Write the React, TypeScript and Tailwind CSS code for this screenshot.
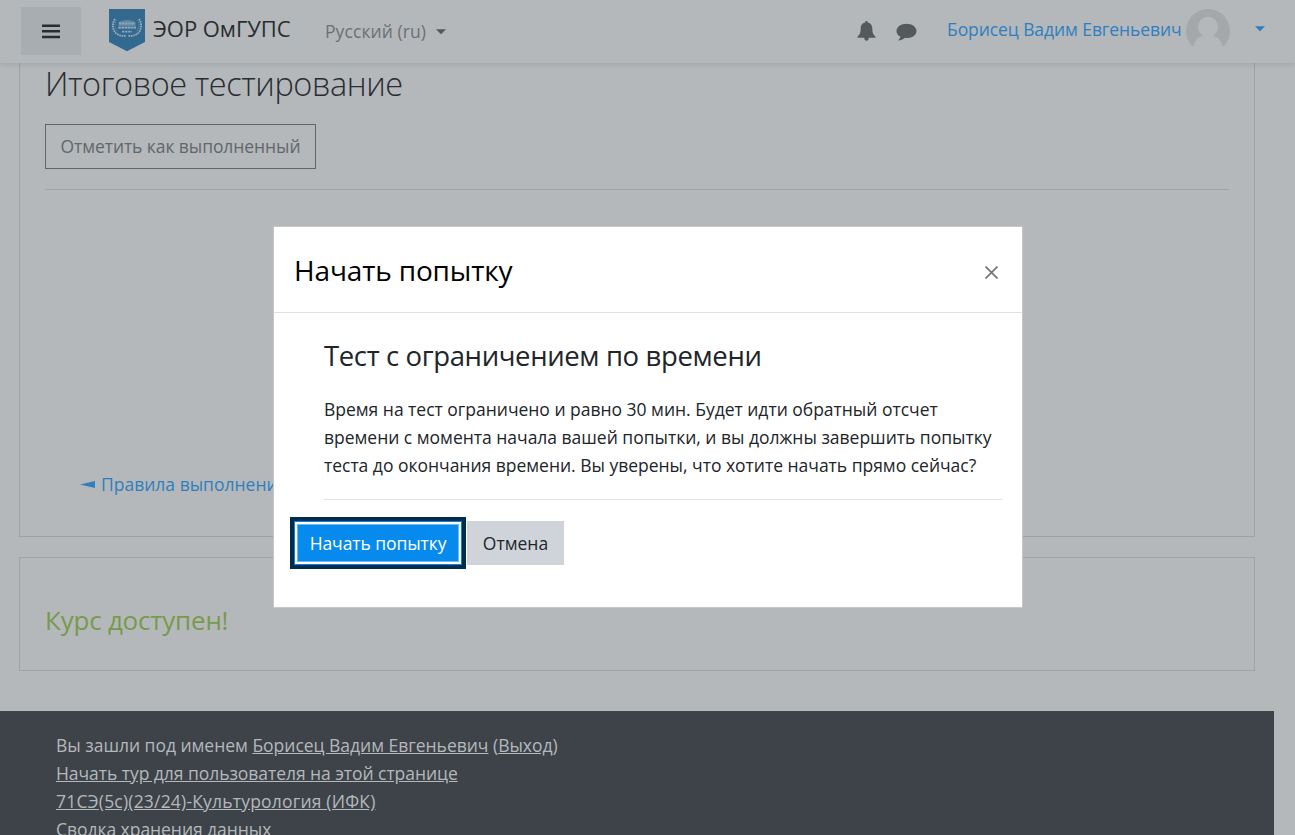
import React from "react";

function Logo() {
  return (
    <svg className="ml-[27px] mt-[9px] h-[43px] w-[38px] shrink-0 self-start" viewBox="0 0 38 43">
      <path d="M1 0H37V33L19 42.3L1 33Z" fill="#33688f" />
      <path d="M1.5 32L19 41.2L36.500 32" fill="none" stroke="#2b6fa6" strokeWidth="1" />
      <g fill="none" stroke="#9db1be" strokeWidth="1.8" strokeDasharray="1.6 0.8">
        <path d="M7 10C3.500 15 4.500 22 9 25C12 27 15 27.300 18 26.500" />
        <path d="M31 10C34.500 15 33.500 22 29 25C26 27 23 27.300 20 26.500" />
      </g>
      <path d="M8.500 11C5.800 15 6.800 20.500 10.500 23M29.500 11C32.200 15 31.200 20.500 27.500 23" fill="none" stroke="#7493a8" strokeWidth="1" strokeDasharray="1.200 1" />
      <path d="M10.500 13Q19 9 27.500 13V17H10.500ZM10 17.500H28V19.500H10Z" fill="#5f87a3" />
      <path d="M11 14.500H27M10.500 18.600H28M14 22.700H24" fill="none" stroke="#91a8b7" strokeWidth="1.8" strokeDasharray="2.300 0.8" />
    </svg>
  );
}

function Caret({ className }: { className: string }) {
  return (
    <svg className={className} width="10" height="6" viewBox="0 0 10 6" fill="currentColor">
      <path d="M0 0.200H10L5 5.300Z" />
    </svg>
  );
}

function Header() {
  return (
    <header className="relative z-10 flex h-[63px] w-full shrink-0 items-center bg-[#b4b8bb] shadow-[0_2px_5px_rgba(0,0,0,0.09)]">
      <button className="ml-[21px] mb-px flex h-12 w-[60px] shrink-0 items-center justify-center bg-[#a8adb1]">
        <svg width="18" height="15" viewBox="0 0 18 15" fill="#292d31">
          <path d="M0 0.500h18v2.500H0zM0 6h18v2.500H0zM0 11.700h18v2.500H0z" />
        </svg>
      </button>
      <Logo />
      <span className="mb-[6px] ml-[7px] w-[139px] whitespace-nowrap text-[22px] tracking-[-0.05px] text-[#292d31]">ЭОР ОмГУПС</span>
      <button className="ml-[33px] flex items-center text-[17.5px] text-[#6c7073]">
        <span className="w-[102px] whitespace-nowrap text-left tracking-[0.08px]">Русский (ru)</span>
        <Caret className="ml-[9px] text-[#53585b]" />
      </button>
      <div className="ml-auto flex items-center">
        <svg className="mb-px h-5 w-[19px]" viewBox="0 0 19 20" fill="#54595c">
          <path d="M9.500 0C8.600 0 8.300 0.500 8.300 1.400C5 2 3.700 4.600 3.700 7.500C3.700 12 2.500 14 0.500 15.700V16.800H7.200C7.300 18.600 8.100 19.700 9.500 19.700S11.700 18.600 11.800 16.800H18.500V15.700C16.500 14 15.300 12 15.300 7.500C15.300 4.600 14 2 10.700 1.400C10.700 0.500 10.400 0 9.500 0Z" />
        </svg>
        <svg className="ml-5 h-[18px] w-[21px]" viewBox="0 0 21 18" fill="#54595c">
          <path d="M10.500 0.800C4.900 0.800 0.500 4 0.500 8C0.500 10.500 2 12.500 4.500 13.800C4.100 15.300 3.200 16.300 2 17.500C4.800 17.300 7 16.300 8.700 15C15.500 15.700 20.500 12.500 20.500 8C20.500 4 16.100 0.800 10.500 0.800Z" />
        </svg>
        <span className="mb-1 ml-[30px] w-[235px] whitespace-nowrap text-[17.5px] tracking-[-0.08px] text-[#2f7fbe]">Борисец Вадим Евгеньевич</span>
        <svg className="mb-[2px] ml-1 h-11 w-11" viewBox="0 0 44 44">
          <path d="M22 0A22 22 0 0 0 7 38C9 31 12 28 17 26.500A10 10 0 1 1 27 26.500C32 28 35 31 37 38A22 22 0 0 0 22 0Z" fill="#a4a8ab" />
        </svg>
        <Caret className="mb-[5px] ml-[25px] mr-[30px] text-[#2f7fbe]" />
      </div>
    </header>
  );
}

function Modal() {
  return (
    <section role="dialog" className="absolute left-[273px] top-[226px] z-20 flex h-[382px] w-[750px] flex-col border border-[#c5c6c7] bg-white">
      <div className="flex h-[86px] shrink-0 items-center justify-between border-b border-[#dee2e6] pl-5 pr-6">
        <h2 className="whitespace-nowrap text-[28px] leading-9 tracking-[-0.15px] text-black">Начать попытку</h2>
        <svg className="mt-[5px]" width="13" height="13" viewBox="0 0 13 13" fill="none" stroke="#757575" strokeWidth="1.700">
          <path d="M0.500 0.500L12.500 12.500M12.500 0.500L0.500 12.500" />
        </svg>
      </div>
      <div className="ml-[50px] mr-5 flex h-[187px] shrink-0 flex-col border-b border-[#dee2e6] text-[#212529]">
        <h3 className="mt-[25px] whitespace-nowrap text-[27.5px] leading-9 tracking-[-0.37px]">Тест с ограничением по времени</h3>
        <p className="mt-[21px] whitespace-nowrap text-[17.5px] leading-7 tracking-[-0.015px]">
          <span className="block">Время на тест ограничено и равно 30 мин. Будет идти обратный отсчет</span>
          <span className="block">времени с момента начала вашей попытки, и вы должны завершить попытку</span>
          <span className="block">теста до окончания времени. Вы уверены, что хотите начать прямо сейчас?</span>
        </p>
      </div>
      <div className="ml-5 mt-[21px] flex gap-[5px] text-[17.5px]">
        <button className="h-11 w-[168px] border border-[#0f7fd9] bg-[#068aed] tracking-[-0.08px] text-white shadow-[inset_0_0_0_2px_#fff,inset_0_0_0_3px_#6cb9f4] outline-4 outline-[#002d4d]">Начать попытку</button>
        <button className="h-11 w-[97px] bg-[#ced4da] text-[#212529]">Отмена</button>
      </div>
    </section>
  );
}

export default function App() {
  return (
    <div className="relative flex h-[835px] w-[1295px] flex-col overflow-hidden bg-[#b4b8bb] font-['Open_Sans','Noto_Sans',sans-serif]">
      <Header />
      <main className="ml-[19px] flex w-[1236px] shrink-0 flex-col">
        <section className="flex h-[474px] flex-col border border-t-0 border-[#9fa3a6] px-[25px]">
          <h1 className="whitespace-nowrap text-[32.5px] font-light leading-[42px] tracking-[-0.42px] text-[#292d31]">Итоговое тестирование</h1>
          <button className="mt-[19px] h-[45px] w-[271px] shrink-0 whitespace-nowrap border border-[#606569] text-[17.5px] tracking-[-0.08px] text-[#62676b]">Отметить как выполненный</button>
          <hr className="mt-5 border-[#a0a4a7]" />
          <a className="ml-[35px] mt-[280px] flex items-center whitespace-nowrap text-[17.5px] leading-7 text-[#2f7fbe]">
            <svg className="mr-[6px]" width="15" height="7" viewBox="0 0 15 7" fill="currentColor"><path d="M0 3.500L15 0V7Z" /></svg>
            Правила выполнения
          </a>
        </section>
        <section className="mt-5 flex h-[114px] items-center border border-[#9fa3a6] px-[25px]">
          <h2 className="mt-[12px] whitespace-nowrap text-[26px] tracking-[-0.22px] text-[#789a4c]">Курс доступен!</h2>
        </section>
      </main>
      <footer className="mt-10 h-[124px] w-[1274px] shrink-0 overflow-hidden whitespace-nowrap bg-[#3d4349] pl-14 pt-5 text-[17.5px] leading-7 tracking-[-0.05px] text-[#b4b8bb]">
        <p className="tracking-[-0.02px]"><span>Вы зашли под именем </span><a className="underline">Борисец Вадим Евгеньевич</a> (<a className="underline">Выход</a>)</p>
        <p><a className="underline">Начать тур для пользователя на этой странице</a></p>
        <p><a className="tracking-[0.19px] underline">71СЭ(5с)(23/24)-Культурология (ИФК)</a></p>
        <p><a className="underline">Сводка хранения данных</a></p>
      </footer>
      <Modal />
    </div>
  );
}
